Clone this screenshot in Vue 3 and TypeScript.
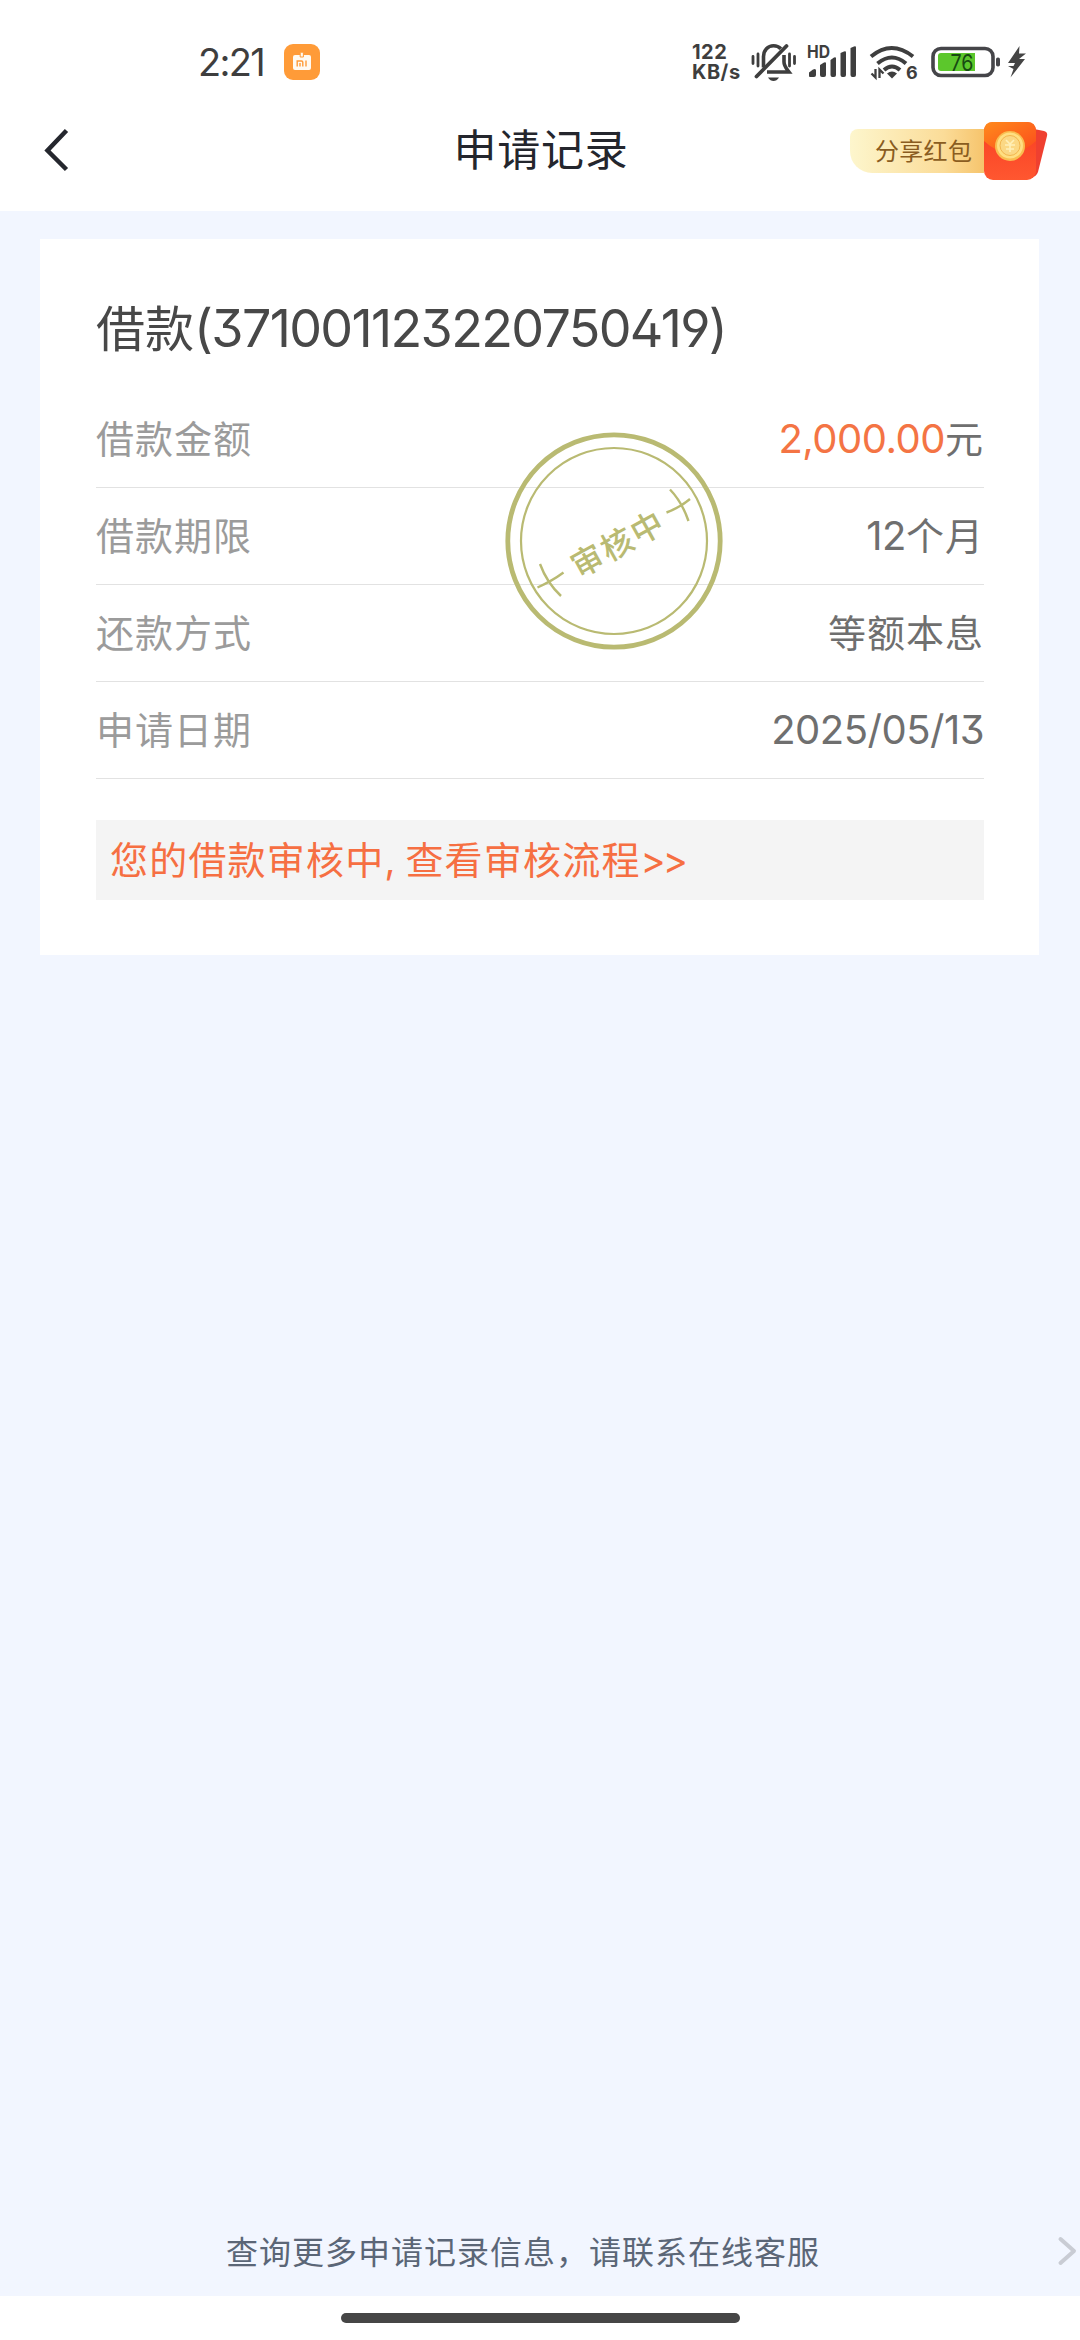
<script setup lang="ts">
interface LoanField {
  label: string
  amount?: string
  digits?: string
  text?: string
}

const fields: LoanField[] = [
  { label: '借款金额', amount: '2,000.00', text: '元' },
  { label: '借款期限', digits: '12', text: '个月' },
  { label: '还款方式', text: '等额本息' },
  { label: '申请日期', digits: '2025/05/13' },
]
</script>

<template>
  <div class="screen">
    <header class="top">
      <div class="status">
        <span class="time">2:21</span>
        <svg class="mi" width="36" height="36" viewBox="0 0 36 36">
          <rect width="36" height="36" rx="9" fill="#ff9b38" />
          <rect x="9" y="11" width="18" height="15" rx="2" fill="#fffaf2" />
          <path d="M16.2 13V8.2h3.2V13z" fill="#fffaf2" stroke="#ff9b38" stroke-width="1" />
          <path d="M13.2 22.500v-5.500h4.300q1.300 0 1.300 1.300v4.200M16 19v3.500M22 16.500v6" fill="none" stroke="#ff9b38" stroke-width="1.400" />
        </svg>
        <div class="speed"><span>122</span><span>KB/s</span></div>
        <svg class="bell" width="46" height="40" viewBox="0 0 46 40" fill="none" stroke="#3e3e3e" stroke-width="3.600">
          <path d="M12.500 25.500V14.500C12.500 8 17 3.700 22.500 3.700c3 0 5.500 1 7.300 3M33 13v7c0 4 2 6 5 10H16" />
          <path d="M5.500 34.500L35.500 4" stroke-width="3.800" stroke-linecap="round" />
          <path d="M17 35.500h11c-1.500 2.500-3.500 3.500-5.500 3.500s-4-1-5.500-3.500z" fill="#3e3e3e" stroke="none" />
          <path d="M2 14.500v7M7 12v12M38.500 12v12M43.500 14.500v7" stroke-width="2.800" stroke-linecap="round" />
        </svg>
        <svg class="signal" width="52" height="36" viewBox="0 0 52 36" fill="#3e3e3e">
          <text class="hd" x="0" y="14" textLength="23" lengthAdjust="spacingAndGlyphs">HD</text>
          <path d="M2 32.500v-4l4-3q3-1.500 3 1V31q0 2-2 2H3zM13 21l4-2.500q2-1 2 1V31q0 2-2 2h-2q-2 0-2-2zM23.500 16l3.500-2.500q2-1 2 1V31q0 2-2 2h-1.500q-2 0-2-2zM33.500 9l3.500-1.500q2-.8 2 1V31q0 2-2 2h-1.500q-2 0-2-2zM43.500 4l3.500-1.500q2-.8 2 1V31q0 2-2 2h-1.500q-2 0-2-2z" />
        </svg>
        <svg class="wifi" width="48" height="36" viewBox="0 0 48 36" fill="none" stroke="#3e3e3e" stroke-width="4">
          <path d="M2 12.500Q22.500-4.500 44 12.500M8.500 19.500Q23 7.500 37 19.500M15 26Q23 19 31 26" />
          <path d="M18 29.500q5-4 10 0l-5 5z" fill="#3e3e3e" stroke="none" />
          <path d="M6.500 25v8.500L2.500 29.500M10.500 34v-8.500l4 4" stroke-width="2.300" />
          <text class="six" x="37" y="34.500" fill="#3e3e3e" stroke="none">6</text>
        </svg>
        <svg class="battery" width="70" height="32" viewBox="0 0 70 32">
          <rect x="2" y="2.500" width="60" height="27" rx="8" fill="#fff" stroke="#454549" stroke-width="3.600" />
          <path d="M10 7h34v18H10q-3 0-3-3V10q0-3 3-3z" fill="#5cc72c" />
          <text class="level" x="19.500" y="24.500" textLength="23" lengthAdjust="spacingAndGlyphs">76</text>
          <rect x="65" y="11.500" width="4" height="9" rx="1.800" fill="#454549" />
        </svg>
        <svg class="bolt" width="20" height="32" viewBox="0 0 20 32">
          <path d="M12.500 0L1 17h7L6.500 20H1l5.500 3-3 8.500L18 13h-6l7-5.500h-7z" fill="#454545" />
        </svg>
      </div>
      <div class="nav">
        <svg class="back" width="28" height="44" viewBox="0 0 28 44">
          <path d="M23.500 2.500L4.500 22.500l19 19" fill="none" stroke="#25272e" stroke-width="4.500" />
        </svg>
        <h1>申请记录</h1>
        <div class="share">
          <span class="share-label">分享红包</span>
          <svg class="packet" width="66" height="60" viewBox="0 0 66 60">
            <defs>
              <linearGradient id="flap" x1="0" y1="0" x2="1" y2="1">
                <stop offset="0" stop-color="#ff8a1c" />
                <stop offset="1" stop-color="#fb4a1c" />
              </linearGradient>
              <linearGradient id="body" x1="0" y1="0" x2="0" y2="1">
                <stop offset="0" stop-color="#f83e22" />
                <stop offset="1" stop-color="#ff5730" />
              </linearGradient>
            </defs>
            <path d="M50 8l10 2q4 1 3 5L54 51q-2 5-6 5z" fill="#ef4030" />
            <rect x="0" y="1" width="52" height="58" rx="9" fill="url(#body)" />
            <path d="M0 20V10q0-9 9-9h34q9 0 9 9v10Q39 32 26 32T0 20z" fill="url(#flap)" />
            <circle cx="26" cy="25" r="15" fill="#f9bd50" />
            <circle cx="26" cy="24.500" r="13" fill="#ffdf82" />
            <circle cx="26" cy="24.500" r="10" fill="#fbd884" stroke="#f2b64f" />
            <path d="M22 19l4 4 4-4M21 24h10M22 28h8M26 23v8" fill="none" stroke="#fff0b8" stroke-width="1.600" />
          </svg>
        </div>
      </div>
    </header>

    <main>
      <section class="card">
        <h2>借款<span class="num">(371001123220750419)</span></h2>
        <div v-for="f in fields" :key="f.label" class="row">
          <span class="label">{{ f.label }}</span>
          <span class="value"><span v-if="f.amount" class="num amount">{{ f.amount }}</span><span v-if="f.digits" class="num" :class="{ date: !f.text }">{{ f.digits }}</span><span v-if="f.text" class="han">{{ f.text }}</span></span>
        </div>
        <a class="notice">您的借款审核中<span class="comma">,</span>查看审核流程<span class="more">&gt;&gt;</span></a>
        <svg class="stamp" width="220" height="220" viewBox="0 0 220 220" fill="none" stroke="#b9ba72">
          <circle cx="110" cy="110" r="106.200" stroke-width="4.800" />
          <circle cx="110" cy="110" r="93" stroke-width="2.200" />
          <path d="M33.500 156.500Q48 150 59.500 141.500M36 133Q43 152 57 165M162.500 81.500Q176 76.500 186 68M166 58.500Q178 71 184.500 90" stroke-width="2.400" />
          <text class="stamp-text" x="114" y="125" text-anchor="middle" transform="rotate(-29 113 113)">审核中</text>
        </svg>
      </section>
    </main>

    <footer class="service">
      <span>查询更多申请记录信息，请联系在线客服</span>
      <svg class="forward" width="22" height="32" viewBox="0 0 22 32">
        <path d="M3.500 4L17 16 3.500 28" fill="none" stroke="#c9ccd4" stroke-width="4" stroke-linecap="round" stroke-linejoin="round" />
      </svg>
    </footer>
    <div class="gesture"><i></i></div>
  </div>
</template>

<style>
body {
  background: #f2f6ff;
}
</style>

<style scoped>
.screen {
  width: 1080px;
  height: 2340px;
  display: flex;
  flex-direction: column;
  overflow: hidden;
  background: #f2f6ff;
  font-family: Inter, "Noto Sans CJK SC", sans-serif;
}
.top {
  height: 211px;
  background: #fff;
}
.status {
  height: 92px;
  padding: 32px 0 0 198px;
  box-sizing: border-box;
  display: flex;
  align-items: center;
  color: #3e3e3e;
}
.status svg {
  flex: none;
  overflow: visible;
}
.time {
  width: 86px;
  font-size: 38px;
  line-height: 60px;
  letter-spacing: -1.700px;
}
.speed {
  width: 59px;
  margin-left: 372px;
  display: flex;
  flex-direction: column;
  font-size: 20px;
  font-weight: 700;
  line-height: 20px;
  letter-spacing: 0.500px;
}
.signal {
  margin-left: 10px;
}
.wifi {
  margin-left: 10px;
}
.battery {
  margin-left: 14px;
}
.bolt {
  margin-left: 6px;
}
.hd {
  font: 700 17px Inter, sans-serif;
}
.six {
  font: 700 18px Inter, sans-serif;
}
.level {
  font: 400 23px Inter, sans-serif;
  fill: #174a12;
}
.nav {
  height: 119px;
  padding-bottom: 1px;
  box-sizing: border-box;
  display: grid;
  grid-template-columns: 400px 280px 400px;
  align-items: start;
}
.back {
  margin: 36px 0 0 43px;
}
h1 {
  margin: 27px 0 0;
  padding-left: 2px;
  text-align: center;
  font-size: 43px;
  font-weight: 400;
  line-height: 62px;
  letter-spacing: 0.7px;
  color: #24262d;
}
.share {
  margin-top: 29px;
  margin-left: 170px;
  display: flex;
  align-items: center;
}
.share-label {
  width: 134px;
  height: 44px;
  padding: 2px 0 0 25px;
  box-sizing: border-box;
  border-radius: 8px 0 0 22px;
  background: linear-gradient(90deg, #fdf6cd, #fbdc98 70%, #f6c46c);
  color: #8a5c20;
  font-size: 24px;
  line-height: 42px;
  letter-spacing: 0.3px;
}
main {
  flex: 1;
  padding: 28px 41px 0 40px;
}
.card {
  position: relative;
  height: 716px;
  padding: 56px 55px 0 56px;
  box-sizing: border-box;
  background: #fff;
}
h2 {
  margin: 0;
  height: 96px;
  font-size: 49px;
  font-weight: 400;
  line-height: 68px;
  color: #484848;
  white-space: nowrap;
}
.num {
  font-feature-settings: "ss01", "cv09";
}
h2 .num {
  font-size: 52px;
  letter-spacing: -1.650px;
}
.row {
  height: 97px;
  box-sizing: border-box;
  border-bottom: 1px solid #e2e2e2;
  display: flex;
  justify-content: space-between;
  align-items: center;
  font-size: 38px;
  line-height: 56px;
  letter-spacing: 1px;
}
.label {
  color: #9b9b9b;
}
.value {
  color: #6f6f6f;
}
.value .num {
  font-size: 40px;
  letter-spacing: -0.500px;
}
.value .amount {
  color: #f47444;
}
.notice {
  height: 80px;
  margin-top: 41px;
  padding-left: 14px;
  display: block;
  background: #f4f4f4;
  color: #f66f42;
  font-size: 38px;
  line-height: 80px;
  letter-spacing: 1.200px;
}
.comma {
  display: inline-block;
  width: 21px;
}
.more {
  letter-spacing: -3px;
}
.stamp {
  position: absolute;
  left: 464px;
  top: 192px;
}
.stamp-text {
  font: 500 32px "Noto Sans CJK SC", sans-serif;
  letter-spacing: 2px;
  fill: #b9ba72;
  stroke: none;
}
.service {
  height: 90px;
  padding: 0 0 2px 226px;
  box-sizing: border-box;
  display: flex;
  justify-content: space-between;
  align-items: center;
  color: #5b6677;
  font-size: 32px;
  letter-spacing: 1px;
}
.forward {
  margin: 2px 1px 0 0;
}
.gesture {
  height: 44px;
  display: flex;
  justify-content: center;
  align-items: flex-start;
  background: #fff;
}
.gesture i {
  width: 399px;
  height: 10px;
  margin-top: 17px;
  border-radius: 5px;
  background: #464646;
}
</style>
